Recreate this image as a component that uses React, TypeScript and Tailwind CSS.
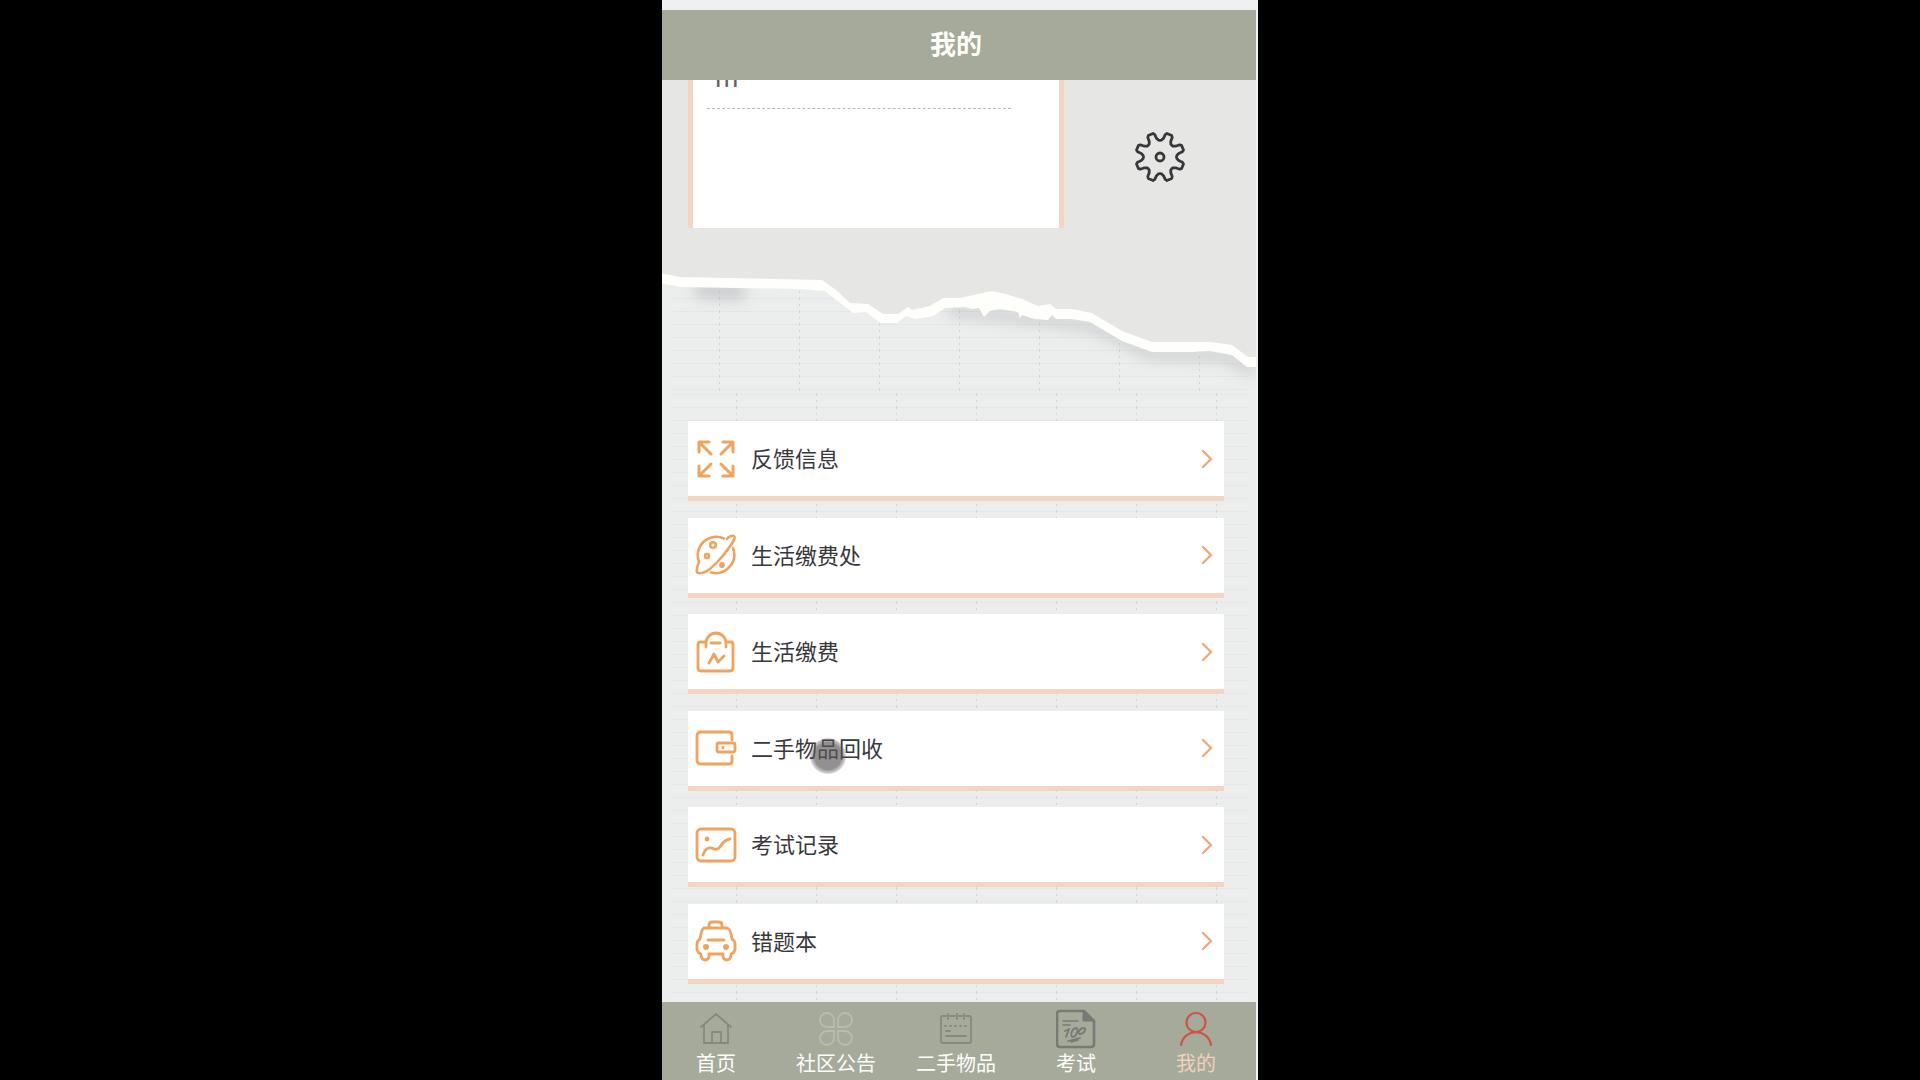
import type { ReactNode } from "react";

const stroke = {
  fill: "none",
  stroke: "currentColor",
  strokeLinecap: "round" as const,
  strokeLinejoin: "round" as const,
};

const TOP_EDGE =
  "656,273 664,274 680,277 822,280 836,290 850,303 868,304 883,314 898,314 908,307 912,310 930,306 943,298 960,298 978,294 992,291 1005,294 1022,299 1038,306 1050,304 1056,309 1072,309 1092,313 1122,331 1152,342 1210,342 1232,345 1248,357 1256,357";
const BOTTOM_EDGE =
  "1256,367 1247,367 1232,355 1210,351 1190,352 1152,352 1122,341 1090,322 1072,319 1056,319 1052,315 1048,320 1035,319 1022,315 1020,318 1018,312 1000,309 990,311 984,317 979,308 972,309 965,307 945,308 933,316 915,319 906,316 897,323 880,323 866,312 853,313 825,291 800,289 680,287 656,282";

function WeavePattern({ id, x, y }: { id: string; x: number; y: number }) {
  return (
    <pattern id={id} x={x} y={y} width="80" height="13" patternUnits="userSpaceOnUse">
      <path d="M0 .5H80" stroke="#dfe1e1" strokeWidth="1" strokeDasharray="3 1" opacity=".8" />
      <path d="M.5 0V13" stroke="#d3d5d5" strokeWidth="1" strokeDasharray="2 4" />
    </pattern>
  );
}

function PaperBackdrop() {
  return (
    <svg
      aria-hidden="true"
      className="absolute inset-0 h-full w-full"
      viewBox="656 80 600 922"
      preserveAspectRatio="xMinYMin slice"
    >
      <defs>
        <WeavePattern id="weaveA" x={719} y={298} />
        <WeavePattern id="weaveB" x={736} y={394} />
        <filter id="soft" x="-20%" y="-40%" width="140%" height="180%">
          <feGaussianBlur stdDeviation="7" />
        </filter>
      </defs>
      <rect x="656" y="80" width="600" height="922" fill="#eceeee" />
      <rect x="672" y="280" width="576" height="112" fill="url(#weaveA)" />
      <rect x="672" y="392" width="576" height="610" fill="url(#weaveB)" />
      <g filter="url(#soft)" fill="none" stroke="#a8a9ab" strokeWidth="10" opacity=".5">
        <path d="M695 290L745 292" strokeWidth="16" />
        <path d="M948 310L1060 322L1092 326L1150 354L1225 356L1256 372" />
      </g>
      <polygon points={`656,80 ${TOP_EDGE} 1256,80`} fill="#e6e6e4" />
      <polygon points={`${TOP_EDGE} ${BOTTOM_EDGE}`} fill="#fefefa" />
    </svg>
  );
}

/* Angle (degrees from the tooth's axis) and radius of each corner of one tooth. */
const TOOTH: [number, number][] = [
  [-22.5, 16.5],
  [-17, 17],
  [-12, 19],
  [-9.5, 23],
  [-6, 24.5],
  [6, 24.5],
  [9.5, 23],
  [12, 19],
  [17, 17],
];

function gearPoints() {
  const points: string[] = [];
  for (let i = 0; i < 8; i++) {
    for (const [angle, radius] of TOOTH) {
      const t = ((i * 45 + 22.5 + angle) * Math.PI) / 180;
      points.push(
        `${(26 + radius * Math.sin(t)).toFixed(1)},${(26 - radius * Math.cos(t)).toFixed(1)}`,
      );
    }
  }
  return points.join(" ");
}

function GearIcon() {
  return (
    <svg viewBox="0 0 52 52" className="size-[52px]" {...stroke} strokeWidth="2.8">
      <polygon points={gearPoints()} />
      <circle cx="26" cy="26" r="4" />
    </svg>
  );
}

const rowIcons: Record<string, ReactNode> = {
  expand: (
    <g strokeWidth="3">
      <path d="M3 13V3H13M3 3L15 15M27 3H37V13M37 3L25 15M3 27V37H13M3 37L15 25M37 27V37H27M37 37L25 25" />
    </g>
  ),
  planet: (
    <g strokeWidth="2.6">
      <path d="M28 3.5A18.5 18.5 0 0 0 3 27Q0 34 1 37Q3 40 11 36Q17 32 24 24Q33 14 38 5Q40 0 35 1Q32 2 31 4" />
      <path d="M37 13A18.5 18.5 0 0 1 15 37.5" />
      <circle cx="17" cy="10" r="2.8" />
      <circle cx="11" cy="21" r="2" />
      <circle cx="26" cy="30" r="1.6" />
    </g>
  ),
  bag: (
    <g strokeWidth="2.8">
      <path d="M10 15V11A10 10 0 0 1 30 11V15M10 10H4Q2 10 2 13V36Q2 39 5 39H34Q37 39 37 36V13Q37 10 35 10H30M15 11H24M13 31L18 22L22 30L28 24" />
    </g>
  ),
  wallet: (
    <g strokeWidth="2.8">
      <path d="M36 12V7Q36 4 33 4H5Q1 4 1 8V32Q1 36 5 36H33Q36 36 36 33V28" />
      <rect x="21" y="15" width="18" height="9" rx="2" />
      <path d="M27 19.5V20" />
    </g>
  ),
  chart: (
    <g strokeWidth="2.8">
      <rect x="1" y="4" width="38" height="32" rx="4" />
      <path d="M7 30C10 22 14 22 18 24C26 26 24 15 34 14" />
      <circle cx="11" cy="14" r="2.4" fill="currentColor" stroke="none" />
    </g>
  ),
  car: (
    <g strokeWidth="2.8">
      <path d="M13 7V4Q13 1 16 1H23Q26 1 26 4V7M8 7H31Q34 8 35 13L36 18Q39 20 39 23V29Q38 32 35 33V35Q34 39 31 39Q28 39 27 36V33H13V36Q12 39 9 39Q6 39 5 35V33Q2 32 1 29V23Q1 20 4 18L5 13Q6 8 8 7M12 19H28" />
      <circle cx="10" cy="26" r="1.6" fill="currentColor" />
      <circle cx="30" cy="26" r="1.6" fill="currentColor" />
    </g>
  ),
};

const rows = [
  { icon: "expand", label: "反馈信息" },
  { icon: "planet", label: "生活缴费处" },
  { icon: "bag", label: "生活缴费" },
  { icon: "wallet", label: "二手物品回收", pressed: true },
  { icon: "chart", label: "考试记录" },
  { icon: "car", label: "错题本" },
];

const tabs: { label: string; tone: string; icon: ReactNode; active?: boolean }[] = [
  {
    label: "首页",
    tone: "text-[#858980]",
    icon: <path strokeWidth="1.8" d="M5 18L20 5L35 18M8 16V34H32V16M16 34V23H25V34" />,
  },
  {
    label: "社区公告",
    tone: "text-[#b9bcb1]",
    icon: (
      <path
        strokeWidth="1.8"
        d="M18 18H11A7 7 0 1 1 18 11ZM22 18V11A7 7 0 1 1 29 18ZM18 22V29A7 7 0 1 1 11 22ZM22 22H29A7 7 0 1 1 22 29Z"
      />
    ),
  },
  {
    label: "二手物品",
    tone: "text-[#858980]",
    icon: (
      <g strokeWidth="1.8">
        <path d="M10 7H6Q5 7 5 9V32Q5 34 7 34H33Q35 34 35 32V9Q35 7 33 7H30M14 7H19M23 7H26M12 5V10M21 5V10M28 5V10M10 22H14M10 27H30" />
        <path d="M9 17H31" strokeDasharray="1 4" />
      </g>
    ),
  },
  {
    label: "考试",
    tone: "text-[#777b75]",
    icon: (
      <g>
        <path strokeWidth="2.6" d="M28 2H4Q1 2 1 5V35Q1 38 4 38H35Q38 38 38 35V12Z" />
        <path d="M27 2V12H38Z" fill="currentColor" strokeWidth="1" />
        <path strokeWidth="1.6" d="M7 12H22M7 16H14" />
        <path
          strokeWidth="1.8"
          d="M9 22L13 20L10 28M20 19C15 20 14 28 17 28C21 27 23 19 20 19M28 19C23 19 21 25 24 25C28 25 31 19 28 19M12 32L24 29M15 33L22 31"
        />
      </g>
    ),
  },
  {
    label: "我的",
    tone: "text-[#cc5546]",
    active: true,
    icon: (
      <g strokeWidth="2.2">
        <circle cx="20" cy="13.5" r="9.5" />
        <path d="M5 36C8 19 32 19 35 36" />
      </g>
    ),
  },
];

export default function App() {
  return (
    <div className="flex h-screen justify-center bg-black font-['Noto_Sans_CJK_SC',sans-serif]">
      <div className="flex w-full max-w-[596px] flex-col overflow-hidden bg-[#eff0f2]">
        <div className="-ml-1.5 mr-0.5 flex min-h-0 flex-1 flex-col pt-2.5">
          <header className="flex h-[70px] shrink-0 items-center justify-center bg-[#a6aa9b]">
            <h1 className="pb-1 text-[26px] leading-8 font-bold text-[#fefefa]">我的</h1>
          </header>

          <main className="relative flex min-h-0 flex-1 flex-col overflow-hidden">
            <PaperBackdrop />
            <section className="relative flex items-end justify-between pr-[70px] pl-8">
              <div className="-mt-4 h-[164px] w-[376px] border-x-5 border-[#f4d5c1] bg-white pr-12 pl-3.5">
                <p className="border-b border-dashed border-[#b8b8b8] pb-4 pl-2 font-['Liberation_Sans',sans-serif] text-[28px] leading-7 text-[#666]">
                  m
                </p>
              </div>
              <button type="button" aria-label="设置" className="mb-[45px] text-[#37383a]">
                <GearIcon />
              </button>
            </section>

            <nav
              aria-label="功能"
              className="relative mt-[193px] flex flex-1 flex-col justify-between px-8 pb-[18px]"
            >
              {rows.map((row) => (
                <a
                  key={row.label}
                  href="#"
                  className="relative flex h-20 items-center gap-3.5 border-b-5 border-[#f4d5c3] bg-white px-[7px] text-[22px] text-[#38383c]"
                >
                  <svg viewBox="-1 -1 42 42" className="size-[42px] text-[#f0a25f]" {...stroke}>
                    {rowIcons[row.icon]}
                  </svg>
                  <span className="flex-1 pb-0.5">{row.label}</span>
                  <svg
                    viewBox="0 0 12 20"
                    className="mr-1 h-5 w-3 text-[#eea87c]"
                    {...stroke}
                    strokeWidth="2.4"
                  >
                    <path d="M2 2L10 10L2 18" />
                  </svg>
                  {row.pressed && (
                    <span className="absolute top-[27px] left-[122px] size-9 rounded-full bg-[radial-gradient(closest-side,#5a5658a8_75%,#5a565830_100%)]" />
                  )}
                </a>
              ))}
            </nav>
          </main>

          <nav aria-label="主导航" className="grid h-[78px] shrink-0 grid-cols-5 bg-[#a6aa9b]">
            {tabs.map((tab) => (
              <a
                key={tab.label}
                href="#"
                aria-current={tab.active ? "page" : undefined}
                className="flex flex-col items-center gap-0.5 pt-[7px]"
              >
                <svg viewBox="0 0 40 40" className={`size-10 ${tab.tone}`} {...stroke}>
                  {tab.icon}
                </svg>
                <span
                  className={`text-[20px] leading-6 ${tab.active ? "text-[#f2d0bd]" : "text-[#fdfdfa]"}`}
                >
                  {tab.label}
                </span>
              </a>
            ))}
          </nav>
        </div>
      </div>
    </div>
  );
}
